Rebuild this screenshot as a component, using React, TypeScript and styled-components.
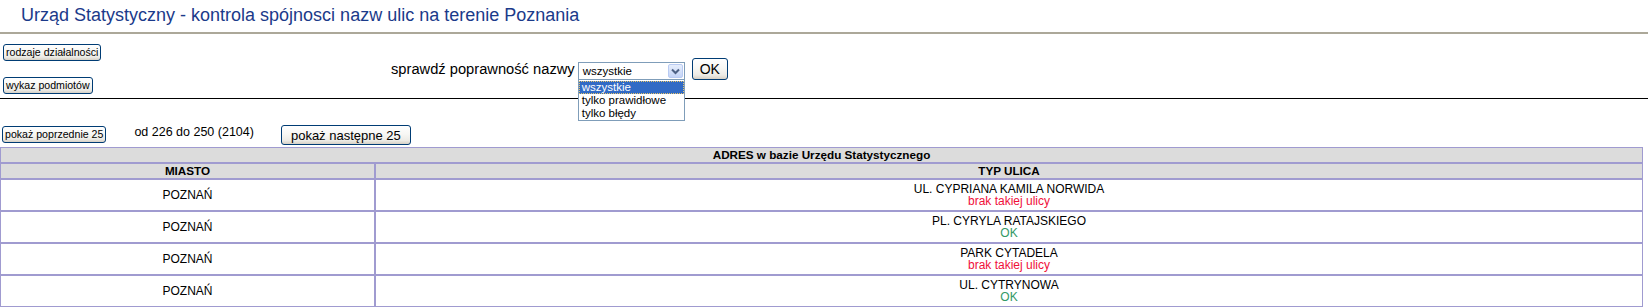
import React from "react";
import styled, { createGlobalStyle } from "styled-components";

type Status = "ok" | "missing";

interface StreetRow {
  city: string;
  street: string;
  status: Status;
}

const rows: StreetRow[] = [
  { city: "POZNAŃ", street: "UL. CYPRIANA KAMILA NORWIDA", status: "missing" },
  { city: "POZNAŃ", street: "PL. CYRYLA RATAJSKIEGO", status: "ok" },
  { city: "POZNAŃ", street: "PARK CYTADELA", status: "missing" },
  { city: "POZNAŃ", street: "UL. CYTRYNOWA", status: "ok" },
];

const filterOptions = ["wszystkie", "tylko prawidłowe", "tylko błędy"];

const FONT = `"Liberation Sans", Arial, sans-serif`;
const GRID = "#a09bd0";

const GlobalStyle = createGlobalStyle`
  html, body {
    margin: 0;
    padding: 0;
    background: #ffffff;
  }
  body {
    font-family: ${FONT};
    color: #000000;
  }
`;

const Page = styled.div`
  width: 1648px;
`;

const Title = styled.h1`
  margin: 0;
  padding: 5px 0 0 21px;
  height: 32px;
  box-sizing: border-box;
  font-size: 18px;
  font-weight: normal;
  line-height: 21px;
  color: #1b3a8a;
`;

const Rule = styled.div<{ $color: string; $thickness: number }>`
  height: ${(p) => p.$thickness}px;
  background: ${(p) => p.$color};
`;

const ControlBar = styled.div`
  display: flex;
  align-items: center;
  height: 50px;
  margin: 10px 0 4px;
`;

const SideMenu = styled.div`
  box-sizing: border-box;
  width: 391px;
  padding-left: 3px;
  display: flex;
  flex-direction: column;
  align-items: flex-start;
  gap: 16px;
`;

const sizes = {
  small: { font: 10.6, height: 17, pad: 2 },
  medium: { font: 13, height: 20, pad: 9 },
  large: { font: 14, height: 22, pad: 7 },
};

const XpButton = styled.button<{ $size: keyof typeof sizes }>`
  font-family: ${FONT};
  font-size: ${(p) => sizes[p.$size].font}px;
  height: ${(p) => sizes[p.$size].height}px;
  padding: 0 ${(p) => sizes[p.$size].pad}px;
  line-height: 1;
  color: #000000;
  border: 1px solid #003c74;
  border-radius: 3px;
  background: linear-gradient(
    #ffffff 0%,
    #f7f7f4 45%,
    #ecebe6 80%,
    #d6d0c5 100%
  );
  white-space: nowrap;
  cursor: pointer;
`;

const FilterForm = styled.form`
  display: flex;
  align-items: flex-end;
  margin: 0;
`;

const FilterLabel = styled.span`
  font-size: 14.7px;
  line-height: 17px;
  margin-bottom: 2px;
  white-space: nowrap;
`;

const SelectWrap = styled.div`
  position: relative;
  margin: 0 7px 0 3px;
`;

const SelectBox = styled.div`
  box-sizing: border-box;
  width: 107px;
  height: 18px;
  border: 1px solid #7f9db9;
  background: #ffffff;
  display: flex;
  align-items: center;
  padding: 0 1px 0 4px;
  font-size: 11.5px;
`;

const SelectValue = styled.span`
  flex: 1;
`;

const ArrowButton = styled.span`
  box-sizing: border-box;
  width: 15px;
  height: 14px;
  border: 1px solid #b9cbf3;
  border-radius: 2px;
  background: linear-gradient(#e6eefc, #c4d4f7);
  display: flex;
  align-items: center;
  justify-content: center;
`;

const OptionList = styled.ul`
  position: absolute;
  top: 100%;
  left: 0;
  box-sizing: border-box;
  width: 107px;
  margin: 0;
  padding: 1px 0 0;
  list-style: none;
  border: 1px solid #7f9db9;
  border-top: none;
  background: #ffffff;
  z-index: 2;
`;

const OptionItem = styled.li<{ $selected: boolean }>`
  height: 13px;
  line-height: 13px;
  padding-left: 3px;
  font-size: 11.5px;
  box-sizing: border-box;
  color: ${(p) => (p.$selected ? "#ffffff" : "#000000")};
  background: ${(p) => (p.$selected ? "#316ac5" : "transparent")};
  outline: ${(p) => (p.$selected ? "1px dotted #e8c56a" : "none")};
  outline-offset: -1px;
`;

const Pager = styled.div`
  display: flex;
  align-items: flex-start;
  height: 23px;
  margin-top: 23px;
  margin-bottom: 2px;
`;

const PagerSlot = styled.div<{ $left: number; $top: number }>`
  margin-left: ${(p) => p.$left}px;
  margin-top: ${(p) => p.$top}px;
`;

const RangeText = styled.span`
  font-size: 12.5px;
  line-height: 14px;
`;

const Table = styled.table`
  width: 1643px;
  border-collapse: separate;
  border-spacing: 0;
  font-family: ${FONT};
`;

const HeadCell = styled.th<{ $width?: number }>`
  ${(p) => (p.$width ? `width: ${p.$width}px;` : "")}
  padding: 0;
  height: 14px;
  border: 1px solid ${GRID};
  background: #dcdcdc;
  font-size: 11.7px;
  font-weight: bold;
  line-height: 14px;
  text-align: center;
  color: #000000;
`;

const Cell = styled.td`
  padding: 0;
  border: 1px solid ${GRID};
  background: #ffffff;
`;

const CellBody = styled.div`
  height: 30px;
  display: flex;
  flex-direction: column;
  align-items: center;
  justify-content: center;
  font-size: 12px;
  line-height: 12px;
  color: #000000;
`;

const StatusText = styled.span<{ $status: Status }>`
  color: ${(p) => (p.$status === "ok" ? "#339966" : "#f0103a")};
`;

const Chevron = () => (
  <svg width="9" height="7" viewBox="0 0 9 7">
    <path
      d="M1 1.5 L4.5 5 L8 1.5"
      fill="none"
      stroke="#4d6185"
      strokeWidth="2"
    />
  </svg>
);

const App = (): JSX.Element => {
  const selected = filterOptions[0];

  return (
    <Page>
      <GlobalStyle />
      <Title>Urząd Statystyczny - kontrola spójnosci nazw ulic na terenie Poznania</Title>
      <Rule $color="#aca899" $thickness={2} />

      <ControlBar>
        <SideMenu>
          <XpButton $size="small">rodzaje działalności</XpButton>
          <XpButton $size="small">wykaz podmiotów</XpButton>
        </SideMenu>
        <FilterForm onSubmit={(e) => e.preventDefault()}>
          <FilterLabel>sprawdź poprawność nazwy</FilterLabel>
          <SelectWrap>
            <SelectBox>
              <SelectValue>{selected}</SelectValue>
              <ArrowButton>
                <Chevron />
              </ArrowButton>
            </SelectBox>
            <OptionList>
              {filterOptions.map((o) => (
                <OptionItem key={o} $selected={o === selected}>
                  {o}
                </OptionItem>
              ))}
            </OptionList>
          </SelectWrap>
          <XpButton $size="large" type="submit">
            OK
          </XpButton>
        </FilterForm>
      </ControlBar>

      <Rule $color="#000000" $thickness={1} />

      <Pager>
        <PagerSlot $left={2} $top={2}>
          <XpButton $size="small">pokaż poprzednie 25</XpButton>
        </PagerSlot>
        <PagerSlot $left={28} $top={0}>
          <RangeText>od 226 do 250 (2104)</RangeText>
        </PagerSlot>
        <PagerSlot $left={27} $top={3}>
          <XpButton $size="medium">pokaż następne 25</XpButton>
        </PagerSlot>
      </Pager>

      <Table>
        <thead>
          <tr>
            <HeadCell colSpan={2}>ADRES w bazie Urzędu Statystycznego</HeadCell>
          </tr>
          <tr>
            <HeadCell $width={373}>MIASTO</HeadCell>
            <HeadCell>TYP ULICA</HeadCell>
          </tr>
        </thead>
        <tbody>
          {rows.map((r) => (
            <tr key={r.street}>
              <Cell>
                <CellBody>{r.city}</CellBody>
              </Cell>
              <Cell>
                <CellBody>
                  <span>{r.street}</span>
                  <StatusText $status={r.status}>
                    {r.status === "ok" ? "OK" : "brak takiej ulicy"}
                  </StatusText>
                </CellBody>
              </Cell>
            </tr>
          ))}
        </tbody>
      </Table>
    </Page>
  );
};

export default App;
